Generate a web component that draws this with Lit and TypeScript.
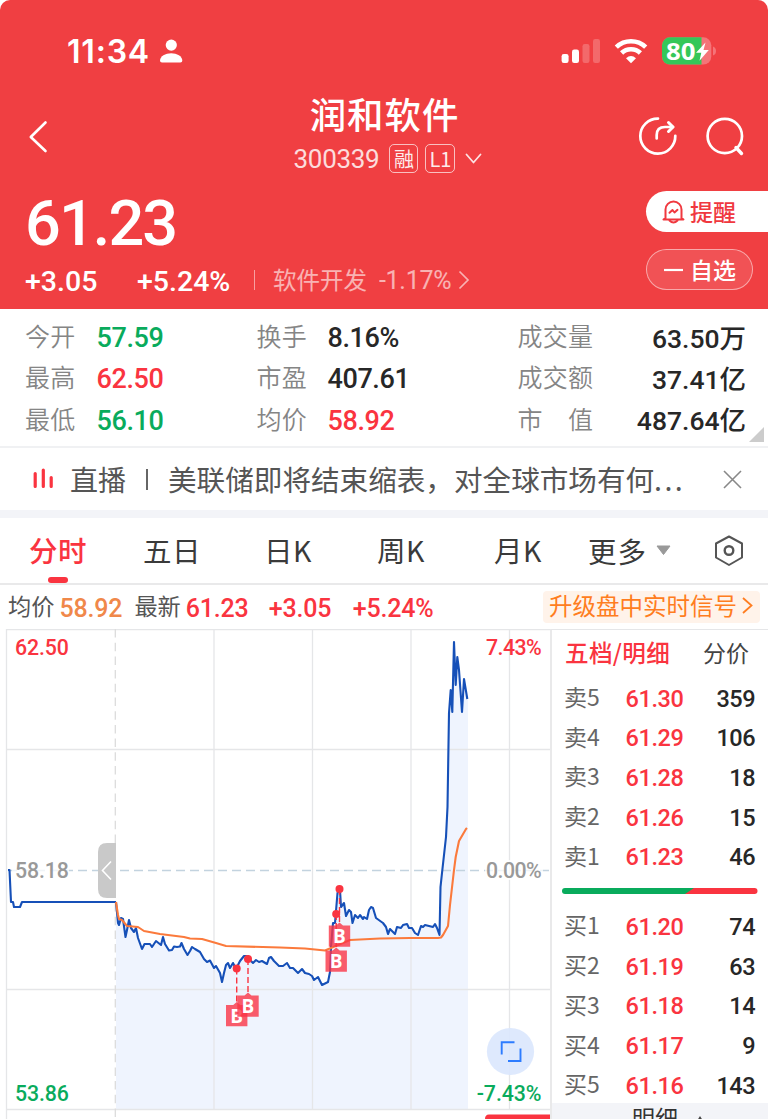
import { LitElement, html, svg, css } from "lit";
import { customElement, property } from "lit/decorators.js";

const tokens = css`
  * { box-sizing: border-box; }
  :host { display: block; }
  svg { display: block; }
  .num { font-family: Roboto, "Noto Sans CJK SC", sans-serif; font-weight: 500; }
  .red { color: #fa3440; }
  .green { color: #09ab5c; }
  .dark { color: #272727; }
`;

@customElement("status-bar")
class StatusBar extends LitElement {
  static styles = [tokens, css`
    .bar { height: 92px; padding: 10px 52px 0 67px; display: flex; align-items: center; color: #fff; }
    .time { font: 600 32px/40px Inter, sans-serif; width: 93px; letter-spacing: 0.8px; white-space: nowrap; padding-top: 2px; }
    .spacer { flex: 1; }
    .pct { font: 700 24px "Open Sans", "Noto Sans", sans-serif; }
  `];
  render() {
    return html`<div class="bar">
      <span class="time">11:34</span>
      <svg width="24" height="26" viewBox="160 38.500 24 26" fill="#fff">
        <circle cx="171.3" cy="45.6" r="5.6" />
        <path d="M160 61.2C160 56.6 165.500 53.700 171.200 53.700S182.300 56.600 182.300 61.200Q182.300 63 180.400 63H162Q160 63 160 61.200Z" />
      </svg>
      <span class="spacer"></span>
      <svg width="156" height="32" viewBox="560 35 156 32">
        <g fill="#fff">
          <rect x="561.600" y="54" width="7" height="9" rx="2.200" />
          <rect x="572" y="49.500" width="7" height="13.500" rx="2.200" />
          <rect x="582.500" y="44" width="7" height="19" rx="2.200" opacity=".22" />
          <rect x="593" y="39" width="7" height="24" rx="2.200" opacity=".22" />
        </g>
        <g fill="none" stroke="#fff" stroke-width="4.600">
          <path d="M616.300 47.100A21.500 21.500 0 0 1 645.700 47.100" />
          <path d="M621.600 53A13.500 13.500 0 0 1 640.400 53" />
        </g>
        <path d="M626 58.200Q631 54 636 58.200L631 63.200Z" fill="#fff" />
        <rect x="662" y="37.300" width="49.300" height="27.200" rx="8" fill="#f57478" />
        <path d="M670 37.300H701.500V64.500H670A8 8 0 0 1 662 56.500V45.300A8 8 0 0 1 670 37.300Z" fill="#35c759" />
        <path d="M713 46.500Q716 47.500 716 51T713 55.500Z" fill="#f57478" />
        <text class="pct" x="666" y="60" fill="#fff" textLength="29.500" lengthAdjust="spacingAndGlyphs">80</text>
        <path d="M705.500 42.500L696 52.800H701.300L699.500 60.800L708.800 50H703.500Z" fill="#fff" />
      </svg>
    </div>`;
  }
}

@customElement("stock-title")
class StockTitle extends LitElement {
  static styles = [tokens, css`
    .row { height: 90px; padding: 0 24px 0 28px; display: grid; grid-template-columns: 106px 1fr 106px; align-items: center; color: #fff; }
    .mid { display: flex; flex-direction: column; align-items: center; gap: 8.500px; padding-bottom: 7.500px; height: 90px; justify-content: center; }
    .name { font: 500 36.400px/42px "Noto Sans CJK SC", sans-serif; letter-spacing: 1px; padding-right: 3px; white-space: nowrap; }
    .code { height: 40px; display: flex; align-items: center; gap: 7px; padding-left: 4px; }
    .id { font-size: 26px; font-weight: 400; letter-spacing: -0.3px; opacity: 0.82; margin-right: 3px; }
    .tag { height: 29px; width: 29px; border: 1.500px solid rgba(255, 255, 255, 0.75); border-radius: 5px; display: flex; align-items: center; justify-content: center; font: 400 20px/26px "Noto Sans CJK SC", sans-serif; opacity: 0.9; }
    .tag.wide { width: 30px; }
    .chev { margin-left: 3px; }
  `];
  render() {
    return html`<div class="row">
      <svg width="22" height="34" viewBox="28 120 22 34" fill="none" stroke="#fff" stroke-width="2.600" stroke-linecap="round" stroke-linejoin="round"><path d="M45.500 122.500L30.800 137L45.500 151" /></svg>
      <div class="mid">
        <span class="name">润和软件</span>
        <div class="code">
          <span class="num id">300339</span>
          <span class="tag">融</span>
          <span class="tag wide">L1</span>
          <svg class="chev" width="17" height="12" viewBox="0 0 17 12" fill="none" stroke="#fff" stroke-width="1.800" opacity=".85" stroke-linecap="round" stroke-linejoin="round"><path d="M1.500 1.500L8.500 9.500L15.500 1.500" /></svg>
        </div>
      </div>
      <svg width="106" height="40" viewBox="638 117 106 40" fill="none" stroke="#fff" stroke-width="2.700" stroke-linecap="round" stroke-linejoin="round">
        <path d="M658 118.600A17.500 17.500 0 1 0 675.300 135.800" />
        <path d="M656.700 138.500V135Q656.700 127 665 127H673" />
        <path d="M668.500 122.500L673 127L668.500 131.500" stroke-width="3" />
        <circle cx="724.800" cy="136" r="17.200" />
        <path d="M736 147.500L741.500 153.500" stroke-width="3.400" />
      </svg>
    </div>`;
  }
}

@customElement("stock-quote")
class StockQuote extends LitElement {
  static styles = [tokens, css`
    .row { height: 127px; padding-left: 25px; display: flex; justify-content: space-between; color: #fff; }
    .left { padding-top: 6px; }
    .price { font-size: 63px; line-height: 72px; letter-spacing: -1.900px; }
    .sub { height: 42px; display: flex; align-items: center; white-space: nowrap; font-size: 28.500px; }
    .chg { width: 112px; }
    .pct { width: 117px; }
    .sep { width: 1px; height: 20px; background: rgba(255, 255, 255, 0.5); margin-right: 18px; margin-bottom: 2px; }
    .sector { font: 400 23.500px/40px "Noto Sans CJK SC", sans-serif; width: 106px; opacity: 0.6; padding-bottom: 5px; }
    .spct { font-size: 25px; font-weight: 400; width: 79px; opacity: 0.6; letter-spacing: -0.3px; padding-bottom: 2px; }
    .arrow { margin-bottom: 2px; }
    .right { width: 122px; padding-top: 9px; display: flex; flex-direction: column; gap: 17px; }
    .pill { font: 500 23px/36px "Noto Sans CJK SC", sans-serif; display: flex; align-items: center; height: 41px; }
    .pill span { padding-bottom: 2px; }
    .alert { background: #fff; color: #f0383f; border-radius: 21px 0 0 21px; padding-left: 16px; gap: 5px; }
    .fav { width: 107px; border: 1.500px solid rgba(255, 255, 255, 0.5); border-radius: 21px; background: rgba(255, 255, 255, 0.1); padding-left: 17px; gap: 7px; }
  `];
  render() {
    return html`<div class="row">
      <div class="left">
        <div class="num price">61.23</div>
        <div class="num sub">
          <span class="chg">+3.05</span><span class="pct">+5.24%</span>
          <span class="sep"></span><span class="sector">软件开发</span><span class="spct">-1.17%</span>
          <svg class="arrow" width="12" height="20" viewBox="0 0 12 20" fill="none" stroke="#fff" stroke-width="1.700" opacity=".6"><path d="M1.500 1.500L10 10L1.500 18.500" /></svg>
        </div>
      </div>
      <div class="right">
        <div class="pill alert">
          <svg width="23" height="24" viewBox="0 0 23 24" fill="none" stroke="#f0383f" stroke-width="2" stroke-linecap="round" stroke-linejoin="round">
            <path d="M3.500 18V9.500A8 8 0 0 1 19.500 9.500V18L21.500 19.500H1.500Z" /><path d="M7.500 20.500Q11.500 24.500 15.500 20.500" /><path d="M7.500 12.800L10.500 10L12.500 12.500L15.500 9.800" />
          </svg><span>提醒</span>
        </div>
        <div class="pill fav">
          <svg width="19" height="4" viewBox="0 0 19 4"><path d="M0 2H19" stroke="#fff" stroke-width="2.200" /></svg><span>自选</span>
        </div>
      </div>
    </div>`;
  }
}

@customElement("stock-stats")
class StockStats extends LitElement {
  static styles = [tokens, css`
    .grid { height: 139px; padding: 8px 22px 0 25px; display: grid; grid-template-columns: 71.500px 160px 71px 190px 98px 1fr; grid-auto-rows: 41.300px; align-items: center; border-bottom: 2px solid #f0f1f3; background: #fff; position: relative; }
    .label { font: 350 25px/40px "Noto Sans CJK SC", sans-serif; color: #858585; padding-bottom: 5px; white-space: pre; letter-spacing: 0.2px; }
    .val { font-size: 27px; line-height: 40px; white-space: nowrap; letter-spacing: -0.4px; padding-top: 1px; }
    .end { text-align: right; font-size: 26.500px; letter-spacing: 0; padding-top: 2px; }
    .corner { position: absolute; right: 4px; bottom: 4px; }
  `];
  render() {
    const cells: [string, string, string][] = [
      ["今开", "57.59", "green"], ["换手", "8.16%", "dark"], ["成交量", "63.50万", "dark end"],
      ["最高", "62.50", "red"], ["市盈", "407.61", "dark"], ["成交额", "37.41亿", "dark end"],
      ["最低", "56.10", "green"], ["均价", "58.92", "red"], ["市\u3000值", "487.64亿", "dark end"],
    ];
    return html`<div class="grid">
      ${cells.map(([l, v, c]) => html`<span class="label">${l}</span><span class="num val ${c}">${v}</span>`)}
      <svg class="corner" width="15" height="15"><path d="M15 0V15H0Z" fill="#ccc" /></svg>
    </div>`;
  }
}

@customElement("live-strip")
class LiveStrip extends LitElement {
  static styles = [tokens, css`
    .strip { height: 70px; padding: 0 26px 0 33px; display: flex; align-items: center; border-bottom: 8px solid #f3f4f8; background: #fff; font: 400 28.600px/40px "Noto Sans CJK SC", sans-serif; color: #555; white-space: nowrap; }
    .live { margin-left: 15px; font-size: 28px; width: 76px; }
    .sep { width: 2px; height: 21px; background: #666; margin-right: 20px; }
    .msg { flex: 1; }
    .dots { letter-spacing: 2.400px; }
  `];
  render() {
    return html`<div class="strip">
      <svg width="22" height="22" viewBox="0 0 22 22" fill="none" stroke="#fa3440" stroke-width="3.200" stroke-linecap="round"><path d="M2.200 5.500V18.500M10.300 2V18.500M18.200 9.500V18.500" /></svg>
      <span class="live">直播</span><span class="sep"></span><span class="msg">美联储即将结束缩表，对全球市场有何<span class="dots">...</span></span>
      <svg width="19" height="19" viewBox="0 0 19 19" stroke="#888" stroke-width="1.600"><path d="M1 1L18 18M18 1L1 18" /></svg>
    </div>`;
  }
}

@customElement("period-tabs")
class PeriodTabs extends LitElement {
  static styles = [tokens, css`
    .tabs { height: 67px; padding: 0 24px 0 29px; display: grid; grid-template-columns: 114px 121px 113px 117px 94px 1fr 30px; align-items: center; border-bottom: 2px solid #e9e9ea; background: #fff; font: 400 28.500px/64px "Noto Sans CJK SC", sans-serif; color: #3a3a3a; }
    .tab { white-space: nowrap; height: 65px; letter-spacing: 0.4px; }
    .on { color: #fa3440; font-weight: 500; position: relative; }
    .on::after { content: ""; position: absolute; left: 19px; bottom: 0; width: 20px; height: 6px; border-radius: 3px; background: #fa3440; }
    .more { display: flex; align-items: center; gap: 9px; letter-spacing: 1px; }
  `];
  render() {
    return html`<div class="tabs">
      <span class="tab on">分时</span><span class="tab">五日</span><span class="tab">日K</span><span class="tab">周K</span><span class="tab">月K</span>
      <span class="tab more">更多<svg width="15" height="11"><path d="M1 1H14L7.500 9.500Z" fill="#999" stroke="#999" stroke-linejoin="round" /></svg></span>
      <svg width="30" height="32" viewBox="0 0 30 32" fill="none" stroke="#555" stroke-width="2" stroke-linejoin="round"><path d="M15 1.500L28 8.500V22.500L15 30L2 22.500V8.500Z" /><circle cx="15" cy="15.500" r="4.300" stroke-width="2.400" /></svg>
    </div>`;
  }
}

@customElement("price-summary")
class PriceSummary extends LitElement {
  static styles = [tokens, css`
    .line { height: 44px; padding: 0 8px 0 8px; display: flex; align-items: center; background: #fff; white-space: nowrap; }
    .cn { font: 400 23.200px/40px "Noto Sans CJK SC", sans-serif; color: #555; padding-bottom: 4px; }
    .v { font-size: 25px; padding-top: 2px; letter-spacing: -0.2px; }
    .avg { color: #f0884a; margin-left: 5px; width: 75px; }
    .last { margin-left: 5px; width: 83px; }
    .chg { width: 84px; }
    .sig { margin-left: auto; width: 217px; height: 32px; background: #fff3ea; border-radius: 4px; color: #ff7d20; font: 400 23.500px/29px "Noto Sans CJK SC", sans-serif; display: flex; align-items: center; padding: 0 7px 2px 6px; justify-content: space-between; margin-bottom: 1px; }
  `];
  render() {
    return html`<div class="line">
      <span class="cn">均价</span><span class="num v avg">58.92</span>
      <span class="cn">最新</span><span class="num v red last">61.23</span>
      <span class="num v red chg">+3.05</span><span class="num v red">+5.24%</span>
      <span class="sig">升级盘中实时信号<svg width="11" height="17" viewBox="0 0 11 17" fill="none" stroke="#ff7d20" stroke-width="1.800"><path d="M1 1L9.500 8.500L1 16" /></svg></span>
    </div>`;
  }
}

const PRE = "8,870 9.500,870 11,902 13,902 14,907 20,907 22,902 116,902";
const INTRADAY = "116,902 118,923 119,925 121,918 123,919 125.500,937 127,930 129,920 131,928 134,932 136,928 138,938 142,949 144.500,944 150,944 152,947 154,944 156,941 161,945 163,937 165,944 169,950.500 172,950 174,946.500 177,947 180,946.500 181.500,943 184,949 187.500,955 190,951 192,947 195,949 200,952 204,959 207,962 210,960.500 214,968 216,966 220,973 222,982 224,973 226,965 228,963 230,968 233,963 236,969 240,961 244,956 248,956 250,960 253,963 256,960 259,962 262,961 267,964 269,958 271,957 274,961 279,966 283,966 287,963 290,968 293,968 298,973 302,969 305,973 309,974 312,976 314,980 318,977 322,985 328,982 330,972 331,947 333,923 335,923 337.500,893 340,890 341,907 344,903 346,916 349,910 351,912 352.500,923 355,915 358,918 360,915 363,919 364,917 367,919 369,910 371,907 373,908 376,918 383,923 386,927 388,934 390,929 395,934 397,927 401,928 403,925 407,924 409,928 412,928 415,933 418,935 421,926 423,927 425,925 433,927 435,924 437,928 439.500,935 440.500,887 442,873 446,837 447.500,807 449,713 450.700,690 452.300,712 454,642 455.700,685 457.300,657 459,670 462,712 464,679 467.300,699";
const AVERAGE = "116,902 118,915 119,919 122,920 127,926 138,927 144,931 160,934 184,937 190,938.500 202,939 216,943 226,946 280,947.500 305,948.500 325,950.500 350,940 380,938.500 410,938 438,938 441,937.500 443,935 448,926 450,905 454,870 455.700,857 459,841 466,829 467,828";
const TRADES = [
  { x: 236.7, y: 968.5, top: 1005 }, { x: 248, y: 959, top: 995.5 },
  { x: 336.2, y: 914, top: 950.5 }, { x: 339.5, y: 889, top: 925.5 },
];

@customElement("intraday-chart")
class IntradayChart extends LitElement {
  static styles = [tokens, css`
    .axis { font-size: 21.300px; letter-spacing: -0.15px; }
    .pct { letter-spacing: -0.6px; }
    .wide { letter-spacing: -0.05px; }
    .tag { font: 700 19px "Open Sans", sans-serif; }
  `];
  render() {
    return html`<svg width="550" height="490" viewBox="0 629 550 490">
      <rect x="0" y="629" width="550" height="490" fill="#fff" />
      <polygon points="${INTRADAY} 468,699 468,1109 116,1109" fill="#eff4fe" />
      <g stroke="#e5e6e8" stroke-width="1.300" fill="none">
        <path d="M6.500 1119V629.500H550M6.500 749.500H550M6.500 989.500H550M6.500 1109.500H550M214 630V1109M312.500 630V1109M411 630V1109M509.500 630V1109" />
        <path d="M115.300 629V1119" stroke-dasharray="8.500 5.200" stroke="#dcdcdc" />
        <path d="M8 870.500H550" stroke-dasharray="9 5" stroke="#c3d3df" />
      </g>
      <rect x="12" y="860" width="57" height="20" fill="#fff" opacity=".75" />
      <rect x="485" y="860" width="58" height="20" fill="#fff" opacity=".75" />
      <g class="num axis">
        <text x="15" y="654.600" fill="#fa3440">62.50</text>
        <text class="pct" x="541" y="654.600" fill="#fa3440" text-anchor="end">7.43%</text>
        <text x="15" y="878.200" fill="#999">58.18</text>
        <text class="pct" x="541" y="878.200" fill="#999" text-anchor="end">0.00%</text>
        <text x="15" y="1101" fill="#09ab5c">53.86</text>
        <text class="wide" x="541.500" y="1101" fill="#09ab5c" text-anchor="end">-7.43%</text>
      </g>
      <path d="M116 843H107Q98 843 98 852V889Q98 898 107 898H116Z" fill="#c9c9c9" />
      <path d="M111 861.500L102.500 870.500L111 879.500" fill="none" stroke="#fff" stroke-width="1.600" />
      <g fill="none" stroke-width="2.100" stroke-linejoin="round">
        <polyline points="${PRE}" stroke="#1650b8" />
        <polyline points="${INTRADAY}" stroke="#1650b8" />
        <polyline points="${AVERAGE}" stroke="#fb7a3c" />
      </g>
      ${TRADES.map((t) => svg`
        <path d="M${t.x} ${t.y}V${t.top - 3}" stroke="#fa3440" stroke-width="1.400" stroke-dasharray="6 3" />
        <circle cx=${t.x} cy=${t.y} r="4" fill="#fa3440" />`)}
      ${TRADES.map((t) => svg`
        <path d="M${t.x - 10.7} ${t.top}H${t.x - 3.5}L${t.x} ${t.top - 3}L${t.x + 3.5} ${t.top}H${t.x + 10.7}V${t.top + 21.3}H${t.x - 10.7}Z" fill="#fa3446" fill-opacity=".8" />
        <text class="tag" x=${t.x} y=${t.top + 17.5} text-anchor="middle" fill="#fff">B</text>`)}
      <circle cx="510.500" cy="1051.500" r="23.600" fill="#dbe7fd" fill-opacity=".92" />
      <path d="M501.700 1054.500V1042.200H514.500M508 1061H520.500V1048.500" fill="none" stroke="#2d7cff" stroke-width="1.900" />
      <path d="M485 1119Q485 1114.500 489 1114.500H550V1119Z" fill="#fa3440" />
    </svg>`;
  }
}

@customElement("order-book")
class OrderBook extends LitElement {
  static styles = [tokens, css`
    .book { width: 218px; height: 490px; border-left: 2px solid #e9e9ea; border-top: 1px solid #e5e6e8; background: #fff; overflow: hidden; }
    .head { height: 48px; padding: 0 19px 4px 13px; display: flex; justify-content: space-between; align-items: center; font: 400 23px/42px "Noto Sans CJK SC", sans-serif; color: #444; }
    .on { font-weight: 500; color: #fa3440; font-size: 23.600px; letter-spacing: 0.3px; }
    .row { height: 39.700px; padding: 0 13px 0 12px; display: grid; grid-template-columns: 61.500px 62px 1fr; align-items: center; }
    .side { font: 400 23px/36px "Noto Sans CJK SC", sans-serif; color: #666; padding-bottom: 4px; }
    .v { font-size: 23.500px; white-space: nowrap; letter-spacing: -0.4px; padding-top: 1px; }
    .qty { text-align: right; letter-spacing: -0.5px; }
    .ratio { display: block; margin: 12px 0 12px 10px; }
    .foot { height: 19px; margin-top: -2px; background: #f3f4f8; display: flex; justify-content: center; gap: 17px; padding-left: 17px; font: 400 23px/28px "Noto Sans CJK SC", sans-serif; color: #333; overflow: hidden; }
    .up { margin-top: 13px; }
  `];
  @property({ attribute: false }) asks = [["卖5", "61.30", "359"], ["卖4", "61.29", "106"], ["卖3", "61.28", "18"], ["卖2", "61.26", "15"], ["卖1", "61.23", "46"]];
  @property({ attribute: false }) bids = [["买1", "61.20", "74"], ["买2", "61.19", "63"], ["买3", "61.18", "14"], ["买4", "61.17", "9"], ["买5", "61.16", "143"]];
  row = ([s, p, q]: string[]) => html`<div class="row"><span class="side">${s}</span><span class="num v red">${p}</span><span class="num v dark qty">${q}</span></div>`;
  render() {
    return html`<div class="book">
      <div class="head"><span class="on">五档/明细</span><span>分价</span></div>
      ${this.asks.map(this.row)}
      <svg class="ratio" width="196" height="6" viewBox="0 0 196 6"><path d="M120 0H192.500A3 3 0 0 1 192.500 6H120Z" fill="#fa3440" /><path d="M3 0H132L123 6H3A3 3 0 0 1 3 0Z" fill="#09ab5c" /></svg>
      ${this.bids.map(this.row)}
      <div class="foot"><span>明细</span><svg class="up" width="10" height="8"><path d="M5 0L10 8H0Z" fill="#444" /></svg></div>
    </div>`;
  }
}

@customElement("app-root")
class AppRoot extends LitElement {
  static styles = [tokens, css`
    :host { width: 768px; height: 1119px; overflow: hidden; background: #fff; }
    .hero { height: 309px; background: #f03f42; border-radius: 10px 10px 0 0; }
    .market { display: flex; }
  `];
  render() {
    return html`
      <div class="hero"><status-bar></status-bar><stock-title></stock-title><stock-quote></stock-quote></div>
      <stock-stats></stock-stats>
      <live-strip></live-strip>
      <period-tabs></period-tabs>
      <price-summary></price-summary>
      <div class="market"><intraday-chart></intraday-chart><order-book></order-book></div>
    `;
  }
}
